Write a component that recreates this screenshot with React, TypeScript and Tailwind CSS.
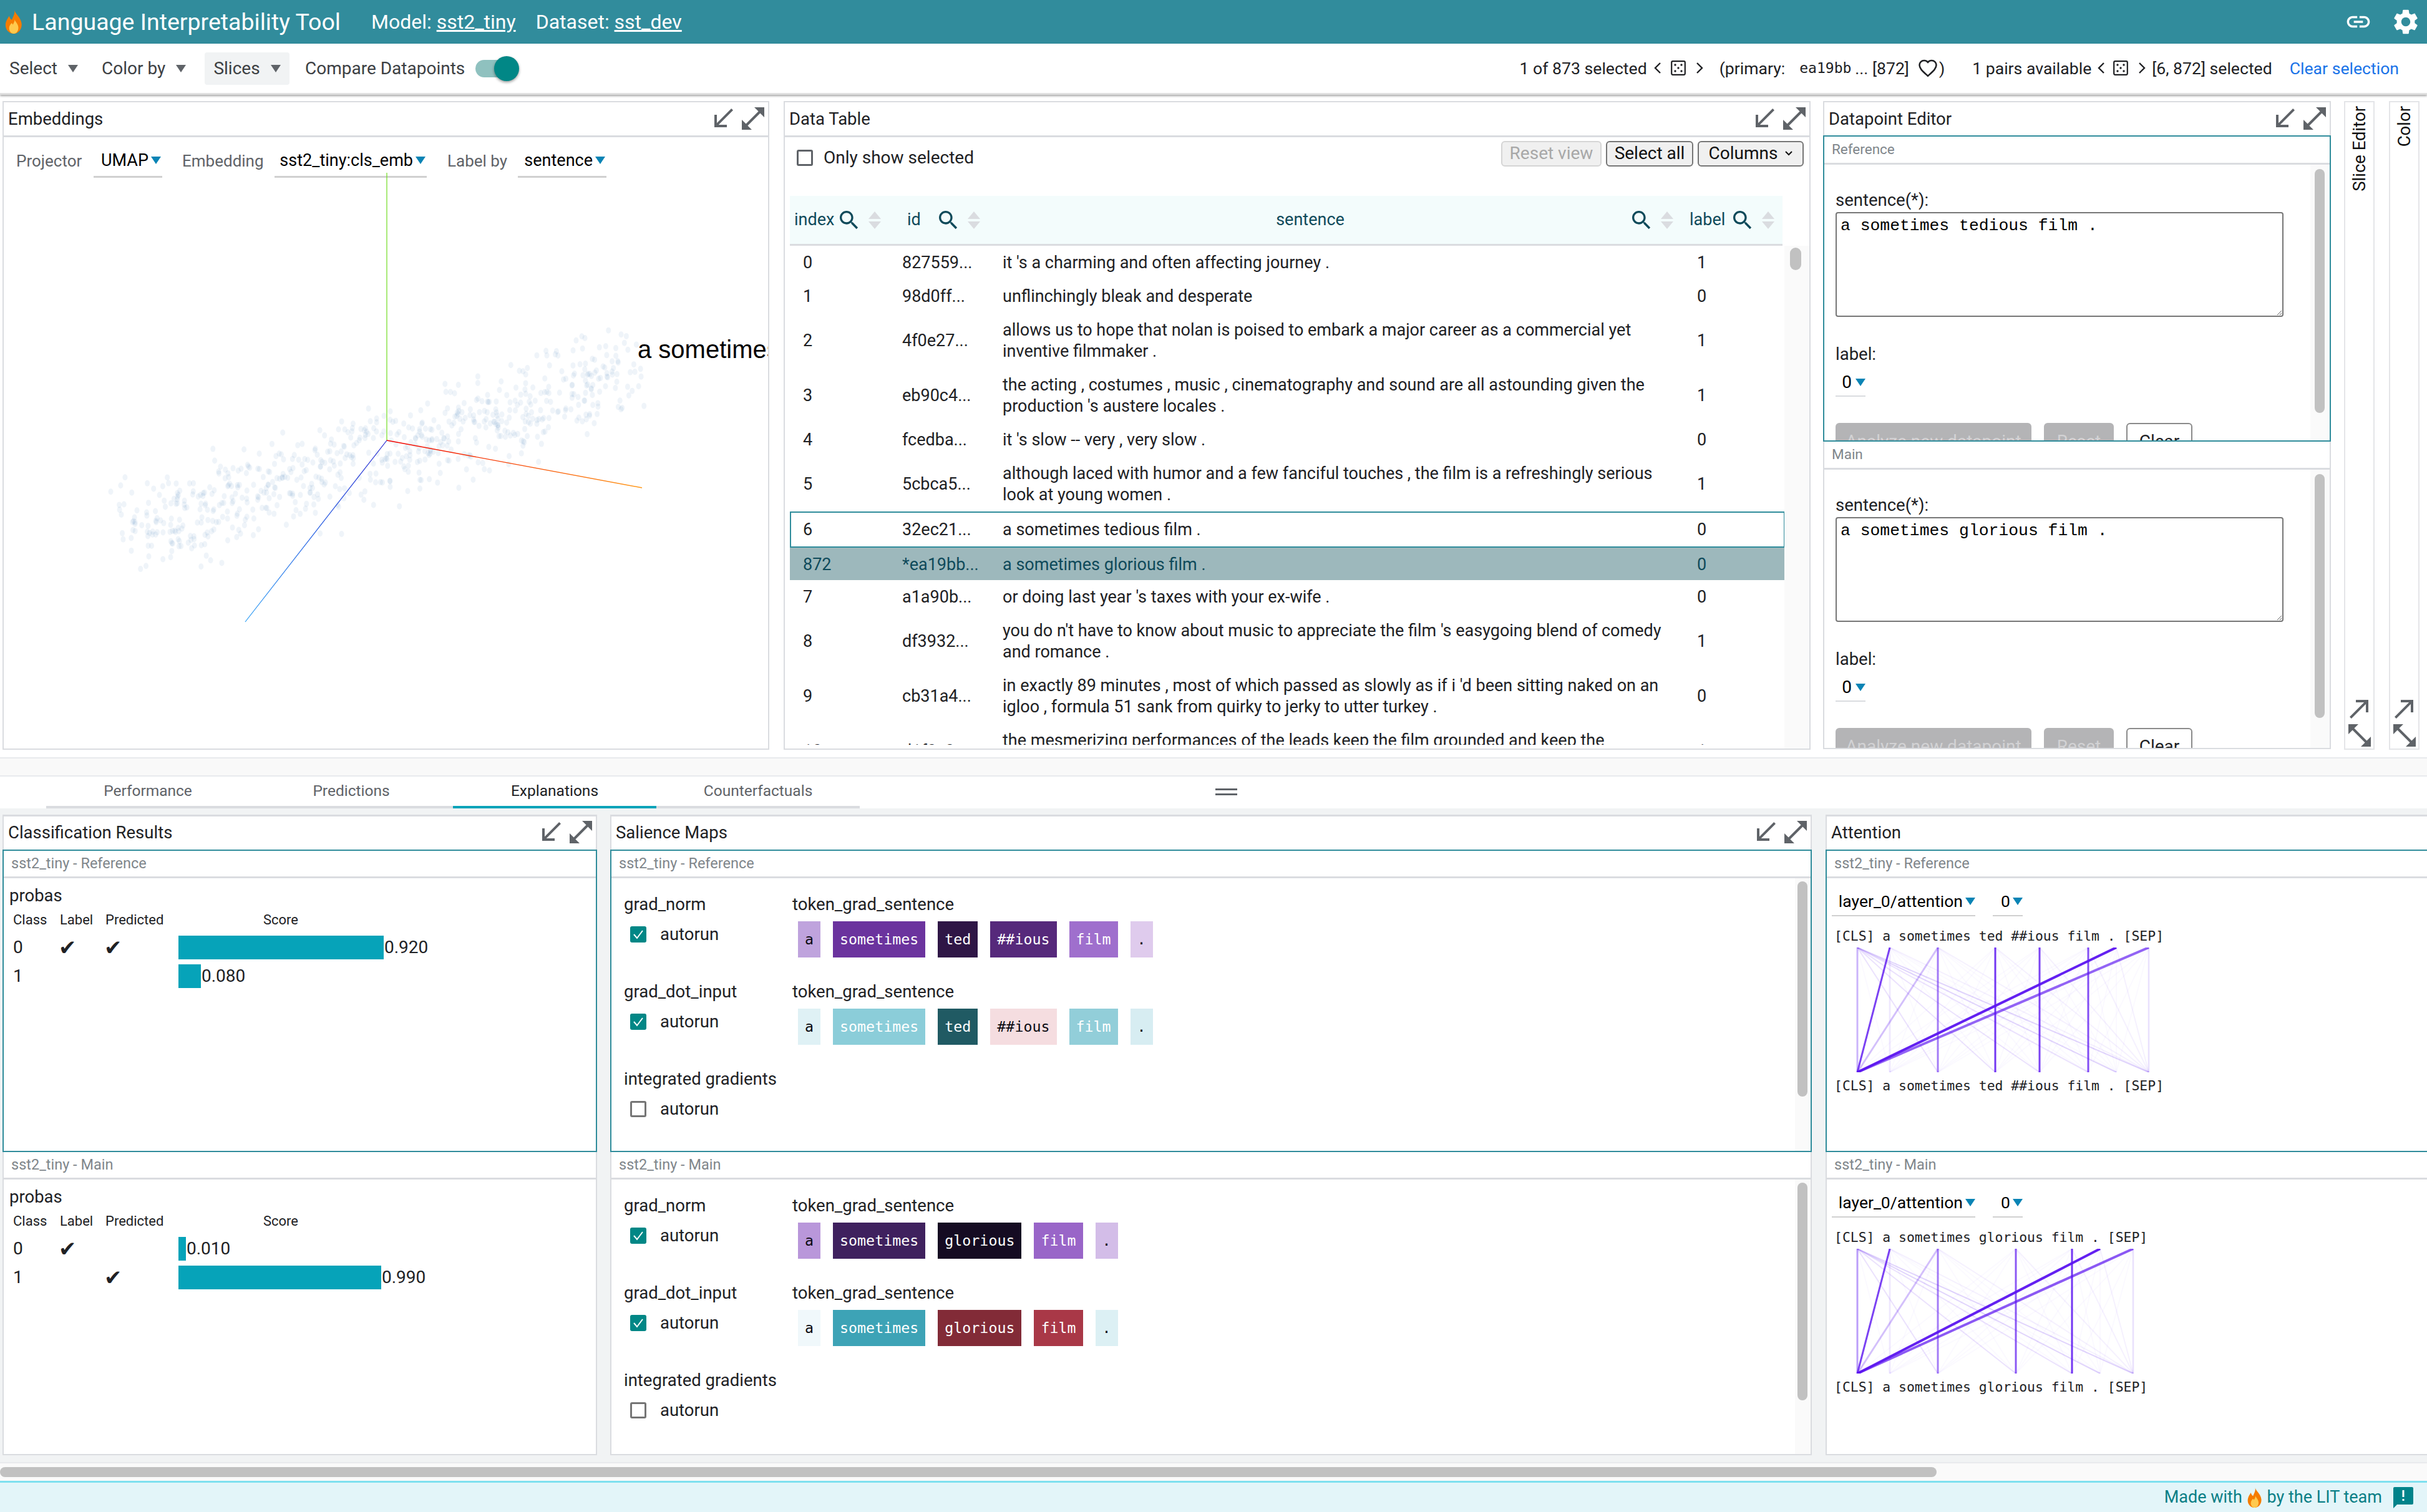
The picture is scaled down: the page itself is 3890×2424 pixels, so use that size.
import React from "react";

const F = "[font-family:Roboto,'Liberation_Sans',sans-serif]";

const Received = ({ c = "#5f6368" }: { c?: string }) => (
  <svg width="48" height="48" viewBox="0 0 24 24" fill={c}><path d="M20 5.41L18.59 4 7 15.59V9H5v10h10v-2H8.41z" /></svg>
);
const OpenFull = ({ flip = false }: { flip?: boolean }) => (
  <svg width="48" height="48" viewBox="0 0 24 24" fill="#5f6368" className={flip ? "-scale-x-100" : ""}>
    <path d="M21 11V3h-8l3.29 3.29-10 10L3 13v8h8l-3.29-3.29 10-10z" />
  </svg>
);
const Made = () => (
  <svg width="48" height="48" viewBox="0 0 24 24" fill="#5f6368"><path d="M9 5v2h6.59L4 18.59 5.41 20 17 8.41V15h2V5z" /></svg>
);
const Search = () => (
  <svg width="40" height="40" viewBox="0 0 24 24" fill="#0f4a5a" className="shrink-0">
    <path d="M15.5 14h-.79l-.28-.27C15.41 12.59 16 11.11 16 9.5 16 5.91 13.09 3 9.5 3S3 5.91 3 9.5 5.91 16 9.5 16c1.61 0 3.09-.59 4.23-1.57l.27.28v.79l5 4.99L20.49 19l-4.99-5zm-6 0C7.01 14 5 11.99 5 9.5S7.01 5 9.5 5 14 7.01 14 9.5 11.99 14 9.5 14z" />
  </svg>
);
const Sort = () => (
  <svg width="22" height="30" viewBox="0 0 22 30" fill="#dadce0" className="shrink-0">
    <path d="M11 1l10 12H1zM11 29L1 17h20z" />
  </svg>
);
const Flame = ({ s = 38 }: { s?: number }) => (
  <svg width={s * 0.74} height={s} viewBox="0 0 26 36">
    <path d="M14 0c1 6 10 11 11 21 .6 8-5 15-12 15S0 30 .5 22C1 16 4 13 6 9c1 3 2 5 4 6 2-5 5-9 4-15z" fill="#f57c00" />
    <path d="M14 14c1 4 6 7 6 13 0 5-3 9-7 9s-7-4-7-8c0-4 2-6 4-8 1 1 1 2 2 2 1-3 3-5 2-8z" fill="#ffc94d" />
  </svg>
);
const Dice = () => (
  <svg width="24" height="24" viewBox="0 0 24 24" className="block">
    <rect x="1.2" y="1.2" width="21.6" height="21.6" rx="2" fill="none" stroke="#202124" strokeWidth="2.2" />
    <g fill="#202124">
      <circle cx="7" cy="7" r="1.7" /><circle cx="17" cy="7" r="1.7" /><circle cx="12" cy="12" r="1.7" />
      <circle cx="7" cy="17" r="1.7" /><circle cx="17" cy="17" r="1.7" />
    </g>
  </svg>
);
const Chev = ({ right = false }: { right?: boolean }) => (
  <svg width="12" height="20" viewBox="0 0 12 20" fill="none" stroke="#202124" strokeWidth="2.4" className="block">
    <path d={right ? "M2 2l8 8-8 8" : "M10 2l-8 8 8 8"} />
  </svg>
);
const Tri = ({ c = "#5f6368", w = 16, h = 12 }: { c?: string; w?: number; h?: number }) => (
  <svg width={w} height={h} viewBox="0 0 16 12" fill={c} preserveAspectRatio="none"><path d="M0 0h16L8 12z" /></svg>
);

const PanelHead = ({ title, icons = true, h = "h-[53px]" }: { title: string; icons?: boolean; h?: string }) => (
  <div className={`${h} shrink-0 flex items-center justify-between pl-[7px] text-[27.5px] text-[#202124]`}>
    <span>{title}</span>
    {icons && (
      <div className="flex -mt-[2px]"><Received /><OpenFull /></div>
    )}
  </div>
);

const Sel = ({ v, w, textCls = "" }: { v: string; w: string; textCls?: string }) => (
  <div className={`${w} flex items-center justify-end gap-[4px] border-b-[3px] border-[#d0d0d0] shrink-0 text-black ${textCls}`}>
    <span>{v}</span>
    <Tri c="#0a84b5" />
  </div>
);

/* ---------- scatter ---------- */
let seed = 12345;
const rnd = () => {
  seed = (seed * 1664525 + 1013904223) % 4294967296;
  return seed / 4294967296;
};
const gauss = () => (rnd() + rnd() + rnd() - 1.5) / 1.5;
const dots: { x: number; y: number }[] = Array.from({ length: 720 }, () => {
  const t = rnd();
  const cx = 205 + t * 810;
  const cy = 868 - t * 280 - 10 * Math.sin(t * 6.28);
  const o = gauss() * 125;
  const a = gauss() * 50;
  return { x: cx + a + o * 0.3, y: cy + o * 0.82 };
});

const Scatter = () => (
  <svg viewBox="4 280 1226 925" width="1226" height="925" className="-mt-[8px] block shrink-0">
    <g fill="#4682b4" fillOpacity="0.085">
      {dots.map((d, i) => (
        <ellipse key={i} cx={d.x} cy={d.y} rx="4" ry="5" />
      ))}
    </g>
    <line x1="618" y1="280" x2="618" y2="709" stroke="#6fdc1e" strokeWidth="1.2" />
    <line x1="618" y1="709" x2="1027" y2="785" stroke="url(#gr)" strokeWidth="1.4" />
    <line x1="618" y1="709" x2="391" y2="1000" stroke="url(#gb)" strokeWidth="1.2" />
    <defs>
      <linearGradient id="gr" gradientUnits="userSpaceOnUse" x1="618" y1="709" x2="1027" y2="785">
        <stop offset="0" stopColor="#f00000" /><stop offset="1" stopColor="#ff9a1a" />
      </linearGradient>
      <linearGradient id="gb" gradientUnits="userSpaceOnUse" x1="618" y1="709" x2="391" y2="1000">
        <stop offset="0" stopColor="#2020d0" /><stop offset="1" stopColor="#2a9df4" />
      </linearGradient>
    </defs>
    <text x="1020" y="577" fontFamily="'Liberation Sans',sans-serif" fontSize="40" fill="#000">a sometimes tedious film .</text>
  </svg>
);

/* ---------- table ---------- */
type Row = { i: string; id: string; s: string[]; l: string; kind?: "ref" | "main" };
const rows: Row[] = [
  { i: "0", id: "827559...", s: ["it 's a charming and often affecting journey ."], l: "1" },
  { i: "1", id: "98d0ff...", s: ["unflinchingly bleak and desperate"], l: "0" },
  { i: "2", id: "4f0e27...", s: ["allows us to hope that nolan is poised to embark a major career as a commercial yet", "inventive filmmaker ."], l: "1" },
  { i: "3", id: "eb90c4...", s: ["the acting , costumes , music , cinematography and sound are all astounding given the", "production 's austere locales ."], l: "1" },
  { i: "4", id: "fcedba...", s: ["it 's slow -- very , very slow ."], l: "0" },
  { i: "5", id: "5cbca5...", s: ["although laced with humor and a few fanciful touches , the film is a refreshingly serious", "look at young women ."], l: "1" },
  { i: "6", id: "32ec21...", s: ["a sometimes tedious film ."], l: "0", kind: "ref" },
  { i: "872", id: "*ea19bb...", s: ["a sometimes glorious film ."], l: "0", kind: "main" },
  { i: "7", id: "a1a90b...", s: ["or doing last year 's taxes with your ex-wife ."], l: "0" },
  { i: "8", id: "df3932...", s: ["you do n't have to know about music to appreciate the film 's easygoing blend of comedy", "and romance ."], l: "1" },
  { i: "9", id: "cb31a4...", s: ["in exactly 89 minutes , most of which passed as slowly as if i 'd been sitting naked on an", "igloo , formula 51 sank from quirky to jerky to utter turkey ."], l: "0" },
  { i: "10", id: "d1f0c2...", s: ["the mesmerizing performances of the leads keep the film grounded and keep the", "audience riveted ."], l: "1" },
];

const TableRow = ({ r }: { r: Row }) => {
  const cls =
    r.kind === "ref"
      ? "outline-2 -outline-offset-2 outline-[#2f8c9b] h-[58px] text-[#202124]"
      : r.kind === "main"
        ? "bg-[#9db8bc] text-[#0f4a5a] h-[52px]"
        : "text-[#202124]";
  return (
    <div className={`w-[1595px] shrink-0 grid grid-cols-[180px_161px_1113px_1fr] items-center py-[10px] leading-[34px] text-[27px] whitespace-nowrap ${cls}`}>
      <div className="pl-[21px]">{r.i}</div>
      <div>{r.id}</div>
      <div>{r.s.map((t) => <div key={t}>{t}</div>)}</div>
      <div>{r.l}</div>
    </div>
  );
};

const HCol = ({ label, cls, labelW }: { label: string; cls: string; labelW: string }) => (
  <div className={`${cls} shrink-0 flex items-center`}>
    <div className={labelW}>{label}</div>
    <Search />
    <div className="ml-[10px]"><Sort /></div>
  </div>
);

const DataTable = () => (
  <div className="w-[1646px] ml-[23px] border-2 border-[#dadce0] bg-white flex flex-col overflow-hidden">
    <PanelHead title="Data Table" />
    <div className="border-t-[3px] border-[#dadce0] flex items-center justify-between h-[98px] shrink-0 pl-[19px] pr-[9px] -mb-[1px]">
      <div className="flex items-center gap-[17px] -mt-[29px] text-[28px] text-[#202124]">
        <div className="w-[26px] h-[26px] rounded-[3px] border-[3px] border-[#5f6368]" />
        <span>Only show selected</span>
      </div>
      <div className="flex gap-[7px] -mt-[43px] text-[28px]">
        <div className="w-[161px] h-[41px] rounded-[6px] bg-[#f0f0f0] border-2 border-[#d5d5d5] text-[#a8a8a8] flex items-center justify-center">Reset view</div>
        <div className="w-[140px] h-[41px] rounded-[6px] bg-[#f0f0f0] border-2 border-[#767676] text-[#111] flex items-center justify-center">Select all</div>
        <div className="w-[170px] h-[41px] rounded-[6px] bg-[#f0f0f0] border-2 border-[#767676] text-[#111] flex items-center justify-center gap-[12px]">Columns
          <svg width="12" height="8" viewBox="0 0 12 8" fill="none" stroke="#111" strokeWidth="2"><path d="M1 1l5 5 5-5" /></svg>
        </div>
      </div>
    </div>
    <div className="flex-1 flex min-h-0">
      <div className="flex-1 min-w-0 flex flex-col overflow-hidden pl-[8px]">
        <div className="w-[1591px] h-[80px] shrink-0 bg-[#f3fcfc] border-b-[3px] border-[#dadce0] flex items-center text-[27px] text-[#0f4a5a]">
          <HCol label="index" cls="pl-[7px]" labelW="w-[68px]" />
          <HCol label="id" cls="ml-[41px]" labelW="w-[46px]" />
          <HCol label="sentence" cls="" labelW="w-[1039px] pl-[17px] text-center" />
          <HCol label="label" cls="ml-[25px]" labelW="w-[65px]" />
        </div>
        <div className="overflow-hidden flex-1 min-h-0 mb-[6px]">
          <div className="flex flex-col h-[1000px]">
            {rows.map((r) => <TableRow key={r.i} r={r} />)}
          </div>
        </div>
      </div>
      <div className="w-[40px] bg-[#fafafa] shrink-0 mt-[80px] pt-[3px] pl-[9px]">
        <div className="w-[18px] h-[36px] rounded-full bg-[#c1c1c1]" />
      </div>
    </div>
  </div>
);

/* ---------- editor ---------- */
const Editor = ({ name, value, top, h }: { name: string; value: string; top: boolean; h: string }) => (
  <div className={`${h} shrink-0 flex flex-col overflow-hidden bg-white ${top ? "border-2 border-[#2f8c9b]" : "border-x-2 border-b-2 border-[#dadce0]"}`}>
    <div className="h-[45px] shrink-0 border-b-[3px] border-[#dadce0] flex items-center pl-[12px] text-[22.5px] text-[#80868b]">{name}</div>
    <div className="flex-1 flex min-h-0">
      <div className="flex-1 min-w-0 pl-[18px] overflow-hidden">
        <div className="h-[57px] pt-[27px] text-[27.5px] leading-[36px] text-[#202124] mt-[12px]">sentence(*):</div>
        <textarea readOnly defaultValue={value} className="block mt-[7px] w-[718px] h-[168px] border-2 border-[#767676] rounded-[4px] px-[6px] py-[5px] text-[26.4px] leading-[31px] text-black [font-family:'Liberation_Mono',monospace] outline-none" />
        <div className="mt-[42px] h-[36px] flex items-center text-[27.5px] text-[#202124]">label:</div>
        <div className="mt-[6px] w-[48px] h-[44px] border-b-2 border-[#dadce0] flex items-center justify-end gap-[6px] text-[28px]">
          <span>0</span><Tri c="#0a84b5" />
        </div>
        <div className="mt-[42px] flex text-[28px] gap-[20px] h-[60px]">
          <div className="w-[314px] bg-[#b4b4b6] text-[#d2d2d4] rounded-t-[6px] flex items-center justify-center whitespace-nowrap">Analyze new datapoint</div>
          <div className="w-[112px] bg-[#b4b4b6] text-[#d2d2d4] rounded-t-[6px] flex items-center justify-center">Reset</div>
          <div className="w-[106px] border-2 border-[#8a8a8a] rounded-[6px] text-[#202124] flex items-center justify-center">Clear</div>
        </div>
      </div>
      <div className="w-[31px] shrink-0 bg-[#fafafa] pl-[7px] pt-[7px]">
        <div className="w-[16px] h-[391px] rounded-full bg-[#c1c1c1]" />
      </div>
    </div>
  </div>
);

const Side = ({ title, ml }: { title: string; ml: string }) => (
  <div className={`w-[49px] ${ml} border-2 border-[#e4e5e8] bg-white flex flex-col items-center justify-between overflow-hidden`}>
    <div className="[writing-mode:vertical-rl] rotate-180 text-[27.5px] leading-[46px] text-[#111] mt-[6px] whitespace-nowrap">{title}</div>
    <div className="flex flex-col items-center -mb-[3px] -space-y-[5px]">
      <Made />
      <OpenFull flip />
    </div>
  </div>
);

/* ---------- bottom ---------- */
const CardHead = ({ t }: { t: string }) => (
  <div className="h-[44px] shrink-0 border-b-[3px] border-[#dadce0] flex items-center pl-[12px] text-[23.5px] text-[#80868b]">{t}</div>
);

const ScoreRow = ({ c, label, pred, w, v }: { c: string; label?: boolean; pred?: boolean; w: string; v: string }) => (
  <div className="flex items-center h-[38px] text-[28px] text-[#202124]">
    <div className="w-[75px]">{c}</div>
    <div className="w-[73px] text-[34px] -ml-[2px] mr-[2px] [font-family:'DejaVu_Sans',sans-serif]">{label ? "✔" : ""}</div>
    <div className="w-[117px] text-[34px] -ml-[2px] mr-[2px] [font-family:'DejaVu_Sans',sans-serif]">{pred ? "✔" : ""}</div>
    <div className={`${w} h-full bg-[#06a3b9] shrink-0`} />
    <div className="ml-[1px]">{v}</div>
  </div>
);

const Probas = ({ a, b }: { a: { l?: boolean; p?: boolean; w: string; v: string }; b: { l?: boolean; p?: boolean; w: string; v: string } }) => (
  <div className="pl-[9px]">
    <div className="mt-[9px] h-[38px] flex items-center text-[27.5px] text-[#202124]">probas</div>
    <div className="mt-[3px] pl-[6px] h-[32px] flex items-center text-[22px] text-[#202124]">
      <div className="w-[75px]">Class</div><div className="w-[73px]">Label</div><div className="w-[117px]">Predicted</div><div className="w-[328px] text-center">Score</div>
    </div>
    <div className="mt-[10px] pl-[6px] flex flex-col gap-[8px]">
      <ScoreRow c="0" label={a.l} pred={a.p} w={a.w} v={a.v} />
      <ScoreRow c="1" label={b.l} pred={b.p} w={b.w} v={b.v} />
    </div>
  </div>
);

const Check = ({ on }: { on?: boolean }) =>
  on ? (
    <div className="w-[26px] h-[26px] rounded-[3px] bg-[#018786] flex items-center justify-center">
      <svg width="20" height="20" viewBox="0 0 20 20" fill="none" stroke="#fff" strokeWidth="2"><path d="M3 10l5 6 9-12" /></svg>
    </div>
  ) : (
    <div className="w-[26px] h-[26px] rounded-[3px] border-[3px] border-[#757575]" />
  );

type Tok = { t: string; bg: string; dark?: boolean };
const Token = ({ t, bg, dark }: Tok) => (
  <div style={{ backgroundColor: bg }} className={`h-[58px] px-[11px] flex items-center text-[23.3px] [font-family:'DejaVu_Sans_Mono',monospace] ${dark ? "text-[#0b0b12]" : "text-white"}`}>{t}</div>
);

const SalRow = ({ name, on, toks }: { name: string; on?: boolean; toks?: Tok[] }) => (
  <div className="h-[140px] shrink-0 flex text-[27.5px] text-[#202124] whitespace-nowrap">
    <div className="w-[290px] pl-[20px] shrink-0">
      <div className="h-[40px] flex items-center">{name}</div>
      <div className="mt-[8px] pl-[10px] h-[40px] flex items-center gap-[22px]"><Check on={on} /><span>autorun</span></div>
    </div>
    {toks && (
      <div>
        <div className="h-[40px] flex items-center">token_grad_sentence</div>
        <div className="mt-[7px] ml-[9px] flex gap-[20px]">{toks.map((x) => <Token key={x.t} {...x} />)}</div>
      </div>
    )}
  </div>
);

const Salience = ({ a, b, thumb }: { a: Tok[]; b: Tok[]; thumb: string }) => (
  <div className="flex-1 flex min-h-0">
    <div className="flex-1 min-w-0 overflow-hidden pt-[22px]">
      <SalRow name="grad_norm" on toks={a} />
      <SalRow name="grad_dot_input" on toks={b} />
      <SalRow name="integrated gradients" />
      <SalRow name="lime" />
    </div>
    <div className="w-[25px] shrink-0 bg-[#fafafa] pl-[4px] pt-[5px]">
      <div className={`w-[16px] ${thumb} rounded-full bg-[#c1c1c1]`} />
    </div>
  </div>
);

const sel1: Tok[][] = [
  [
    { t: "a", bg: "#bfa3dd", dark: true },
    { t: "sometimes", bg: "#6b339e" },
    { t: "ted", bg: "#2f1646" },
    { t: "##ious", bg: "#56297b" },
    { t: "film", bg: "#9f6fcd" },
    { t: ".", bg: "#dfcbed", dark: true },
  ],
  [
    { t: "a", bg: "#dff1f5", dark: true },
    { t: "sometimes", bg: "#8bcdd9" },
    { t: "ted", bg: "#205a63" },
    { t: "##ious", bg: "#f5dde0", dark: true },
    { t: "film", bg: "#92ced9" },
    { t: ".", bg: "#d7edf2", dark: true },
  ],
];
const sel2: Tok[][] = [
  [
    { t: "a", bg: "#b997da", dark: true },
    { t: "sometimes", bg: "#3f215e" },
    { t: "glorious", bg: "#150b22" },
    { t: "film", bg: "#9965c8" },
    { t: ".", bg: "#d3bde8", dark: true },
  ],
  [
    { t: "a", bg: "#f0f8fb", dark: true },
    { t: "sometimes", bg: "#3da3b6" },
    { t: "glorious", bg: "#822b37" },
    { t: "film", bg: "#a93847" },
    { t: ".", bg: "#dcf0f4", dark: true },
  ],
];

const Attn = ({ text, xs, strong }: { text: string; xs: number[]; strong: number[][] }) => {
  const lines: number[][] = [];
  xs.forEach((_, i) =>
    xs.forEach((_, j) => {
      let o = 0.025;
      if (i === 0 && j > 1) o = j >= xs.length - 2 ? 0.18 : 0.12;
      if (j === xs.length - 1) o = Math.max(o, 0.06);
      lines.push([i, j, o, 2]);
    }),
  );
  const all = [...lines, ...strong];
  return (
    <div className="pl-[12px]">
      <div className="mt-[14px] h-[36px] flex items-center whitespace-pre text-[21.4px] text-[#202124] [font-family:'DejaVu_Sans_Mono',monospace]">{text}</div>
      <svg width="528" height="200" viewBox="0 0 528 200" className="block shrink-0">
        {all.map((l, k) => (
          <line key={k} x1={xs[l[0]]} y1="0" x2={xs[l[1]]} y2="200" stroke="#5b14f0" strokeOpacity={l[2]} strokeWidth={l[3]} />
        ))}
      </svg>
      <div className="mt-[4px] h-[36px] flex items-center whitespace-pre text-[21.4px] text-[#202124] [font-family:'DejaVu_Sans_Mono',monospace]">{text}</div>
    </div>
  );
};

const AttnSel = () => (
  <div className="flex items-end pl-[8px] gap-[28px] mt-[23px] text-[26.5px]">
    <Sel v="layer_0/attention" w="w-[230px]" textCls="h-[38px] !border-b-2 pb-[8px]" />
    <Sel v="0" w="w-[48px]" textCls="h-[38px] !border-b-2 pb-[8px]" />
  </div>
);

const Attention = ({ text, xs, strong }: { text: string; xs: number[]; strong: number[][] }) => (
  <div className="flex-1 min-h-0 overflow-hidden">
    <AttnSel />
    <Attn text={text} xs={xs} strong={strong} />
  </div>
);

const BottomPanel = ({ title, w, ml = "", icons = true, a, b }: { title: string; w: string; ml?: string; icons?: boolean; a: React.ReactNode; b: React.ReactNode }) => (
  <div className={`${w} ${ml} shrink-0 flex flex-col overflow-hidden`}>
    <div className="border-2 border-b-0 border-t-[3px] border-[#dadce0] bg-white">
      <PanelHead title={title} icons={icons} h="h-[53px] pb-[2px]" />
    </div>
    <div className="h-[485px] shrink-0 bg-white border-2 border-[#2f8c9b] flex flex-col overflow-hidden">
      <CardHead t="sst2_tiny - Reference" />
      {a}
    </div>
    <div className="flex-1 min-h-0 bg-white border-x-2 border-b-2 border-[#dadce0] flex flex-col overflow-hidden">
      <CardHead t="sst2_tiny - Main" />
      {b}
    </div>
  </div>
);

const App = () => (
  <div className={`w-[3890px] h-[2424px] overflow-hidden flex flex-col bg-white ${F}`}>
    {/* header */}
    <header className="h-[70px] shrink-0 bg-[#318c9c] flex items-center text-white pl-[8px] pr-[10px]">
      <Flame />
      <span className="ml-[15px] text-[37.5px] whitespace-nowrap">Language Interpretability Tool</span>
      <span className="ml-[49px] text-[32px] whitespace-nowrap">Model: <span className="underline">sst2_tiny</span></span>
      <span className="ml-[32px] text-[32px] whitespace-nowrap">Dataset: <span className="underline">sst_dev</span></span>
      <div className="ml-auto flex items-center gap-[30px]">
        <svg width="44" height="44" viewBox="0 0 24 24" fill="#fff"><path d="M3.9 12c0-1.71 1.39-3.1 3.1-3.1h4V7H7c-2.76 0-5 2.24-5 5s2.24 5 5 5h4v-1.9H7c-1.71 0-3.1-1.39-3.1-3.1zM8 13h8v-2H8v2zm9-6h-4v1.9h4c1.71 0 3.1 1.39 3.1 3.1s-1.39 3.1-3.1 3.1h-4V17h4c2.76 0 5-2.24 5-5s-2.24-5-5-5z" /></svg>
        <svg width="48" height="48" viewBox="0 0 24 24" fill="#fff"><path d="M19.14 12.94c.04-.3.06-.61.06-.94 0-.32-.02-.64-.07-.94l2.03-1.58c.18-.14.23-.41.12-.61l-1.92-3.32c-.12-.22-.37-.29-.59-.22l-2.39.96c-.5-.38-1.03-.7-1.62-.94l-.36-2.54c-.04-.24-.24-.41-.48-.41h-3.84c-.24 0-.43.17-.47.41l-.36 2.54c-.59.24-1.13.57-1.62.94l-2.39-.96c-.22-.08-.47 0-.59.22L2.74 8.87c-.12.21-.08.47.12.61l2.03 1.58c-.05.3-.09.63-.09.94s.02.64.07.94l-2.03 1.58c-.18.14-.23.41-.12.61l1.92 3.32c.12.22.37.29.59.22l2.39-.96c.5.38 1.03.7 1.62.94l.36 2.54c.05.24.24.41.48.41h3.84c.24 0 .44-.17.47-.41l.36-2.54c.59-.24 1.13-.56 1.62-.94l2.39.96c.22.08.47 0 .59-.22l1.92-3.32c.12-.22.07-.47-.12-.61l-2.01-1.58zM12 15.6c-1.98 0-3.6-1.62-3.6-3.6s1.62-3.6 3.6-3.6 3.6 1.62 3.6 3.6-1.62 3.6-3.6 3.6z" /></svg>
      </div>
    </header>

    {/* toolbar */}
    <div className="relative z-10 h-[82px] shrink-0 bg-white flex items-center border-b-[3px] border-[#e0e0e0] shadow-[0_2px_3px_rgba(0,0,0,0.35)] text-[28px] text-[#3c4043] whitespace-nowrap">
      <div className="flex items-center pl-[15px] w-[163px] gap-[17px]"><span>Select</span><Tri /></div>
      <div className="flex items-center w-[165px] gap-[17px]"><span>Color by</span><Tri /></div>
      <div className="flex items-center justify-center gap-[17px] w-[136px] h-[52px] bg-[#f1f3f4] rounded-[4px]"><span>Slices</span><Tri /></div>
      <span className="ml-[25px]">Compare Datapoints</span>
      <div className="ml-[17px] w-[70px] h-[40px] flex items-center">
        <div className="w-[50px] h-[28px] rounded-l-full bg-[#8fc1bf]" />
        <div className="w-[40px] h-[40px] rounded-full bg-[#018786] -ml-[20px] shadow-[0_2px_4px_rgba(0,0,0,0.4)]" />
      </div>
      <div className="ml-auto flex items-center pr-[45px] text-[#202124] text-[26.6px]">
        <span>1 of 873 selected</span>
        <span className="ml-[11px]"><Chev /></span>
        <span className="ml-[15px]"><Dice /></span>
        <span className="ml-[16px]"><Chev right /></span>
        <span className="ml-[26px]">(primary:</span>
        <span className="ml-[23px] [font-family:'DejaVu_Sans_Mono',monospace] text-[23px]">ea19bb</span>
        <span className="ml-[6px]">... [872]</span>
        <svg className="ml-[12px]" width="36" height="36" viewBox="0 0 24 24" fill="none" stroke="#202124" strokeWidth="1.7"><path d="M12 20.5l-1.2-1.1C6 15.2 3 12.4 3 8.9 3 6.1 5.2 4 8 4c1.5 0 3 .7 4 1.9C13 4.7 14.5 4 16 4c2.8 0 5 2.1 5 4.9 0 3.5-3 6.3-7.8 10.5L12 20.5z" /></svg>
        <span>)</span>
        <span className="ml-[44px]">1 pairs available</span>
        <span className="ml-[10px]"><Chev /></span>
        <span className="ml-[13px]"><Dice /></span>
        <span className="ml-[16px]"><Chev right /></span>
        <span className="ml-[10px]">[6, 872] selected</span>
        <span className="ml-[28px] text-[#1a73e8]">Clear selection</span>
      </div>
    </div>

    {/* top row */}
    <div className="h-[1050px] shrink-0 flex pl-[4px] pt-[10px] bg-white">
      {/* Embeddings */}
      <div className="w-[1229px] border-2 border-[#dadce0] bg-white flex flex-col overflow-hidden">
        <PanelHead title="Embeddings" />
        <div className="border-t-[3px] border-[#dadce0] h-[68px] shrink-0 flex items-end pl-[20px] text-[26px] leading-[30px] text-[#5f6368]">
          <span className="w-[124px] h-[42px]">Projector</span>
          <Sel v="UMAP" w="w-[110px] h-[42px] pb-[12px] pr-[2px] text-[27px]" />
          <span className="ml-[32px] w-[148px] h-[42px]">Embedding</span>
          <Sel v="sst2_tiny:cls_emb" w="w-[244px] h-[42px] pb-[12px] pr-[2px] text-[27px]" />
          <span className="ml-[33px] w-[113px] h-[42px]">Label by</span>
          <Sel v="sentence" w="w-[142px] h-[42px] pb-[12px] pr-[2px] text-[27px]" />
        </div>
        <Scatter />
      </div>

      <DataTable />

      {/* Datapoint editor */}
      <div className="w-[814px] ml-[20px] flex flex-col overflow-hidden">
        <div className="border-2 border-b-0 border-[#dadce0] bg-white">
          <PanelHead title="Datapoint Editor" />
        </div>
        <Editor name="Reference" value="a sometimes tedious film ." top h="h-[491px]" />
        <Editor name="Main" value="a sometimes glorious film ." top={false} h="h-[493px]" />
      </div>

      <Side title="Slice Editor" ml="ml-[21px]" />
      <Side title="Color" ml="ml-[23px]" />
    </div>

    {/* resize bar */}
    <div className="h-[31px] shrink-0 mt-[12px] bg-[#f9f9f9] border-y-2 border-[#e8eaed]" />

    {/* tabs */}
    <div className="h-[51px] shrink-0 bg-white flex pl-[74px] text-[24.5px] text-[#5f6368]">
      {["Performance", "Predictions", "Explanations", "Counterfactuals"].map((t, i) => (
        <div key={t} className={`w-[326px] h-full flex items-center justify-center border-b-[4px] ${i === 2 ? "border-[#06a3b9] text-[#202124]" : "border-[#dadce0]"}`}>{t}</div>
      ))}
      <div className="ml-[570px] w-[35px] flex flex-col justify-center gap-[5px] pb-[2px]">
        <div className="h-[3px] bg-[#5f6368]" /><div className="h-[3px] bg-[#5f6368]" />
      </div>
    </div>

    {/* bottom row */}
    <div className="flex-1 min-h-0 bg-[#f1f3f4] flex flex-col">
      <div className="h-[1037px] shrink-0 flex pl-[4px] pt-[10px] overflow-hidden">
        <BottomPanel
          title="Classification Results"
          w="w-[953px]"
          a={<Probas a={{ l: true, p: true, w: "w-[329px]", v: "0.920" }} b={{ w: "w-[36px]", v: "0.080" }} />}
          b={<Probas a={{ l: true, w: "w-[12px]", v: "0.010" }} b={{ p: true, w: "w-[325px]", v: "0.990" }} />}
        />
        <BottomPanel
          title="Salience Maps"
          w="w-[1926px]"
          ml="ml-[21px]"
          a={<Salience a={sel1[0]} b={sel1[1]} thumb="h-[345px]" />}
          b={<Salience a={sel2[0]} b={sel2[1]} thumb="h-[349px]" />}
        />
        <BottomPanel
          title="Attention"
          w="w-[1020px]"
          ml="ml-[22px]"
          icons={false}
          a={
            <Attention
              text="[CLS] a sometimes ted ##ious film . [SEP]"
              xs={[37, 89, 166, 258, 329, 407, 452, 504]}
              strong={[
                [0, 0, 0.3, 3], [1, 0, 0.8, 3], [2, 0, 0.25, 3], [2, 2, 0.55, 3], [3, 3, 0.85, 3],
                [4, 4, 0.8, 3], [5, 5, 0.75, 3], [6, 0, 0.95, 4], [7, 0, 0.65, 4], [1, 1, 0.07, 3], [7, 7, 0.07, 3],
              ]}
            />
          }
          b={
            <Attention
              text="[CLS] a sometimes glorious film . [SEP]"
              xs={[37, 89, 166, 291, 381, 426, 479]}
              strong={[
                [0, 0, 0.4, 3], [1, 0, 0.8, 3], [2, 0, 0.25, 3], [2, 2, 0.55, 3], [3, 3, 0.7, 3],
                [4, 4, 0.85, 3], [5, 0, 0.95, 4], [6, 0, 0.7, 4], [1, 1, 0.07, 3], [6, 6, 0.07, 3],
              ]}
            />
          }
        />
      </div>

      {/* horizontal scrollbar */}
      <div className="mt-[11px] h-[30px] shrink-0 bg-[#fafafa] border-t-2 border-[#e8eaed] pt-[6px]">
        <div className="w-[3104px] h-[16px] rounded-full bg-[#c1c1c1]" />
      </div>

      {/* footer */}
      <footer className="flex-1 min-h-0 bg-[#e3f5f9] border-t-[3px] border-[#7ee0ef] flex items-center justify-end pr-[22px] text-[27px] text-[#0a7f86] whitespace-nowrap">
        <span>Made with</span>
        <span className="mx-[8px]"><Flame s={32} /></span>
        <span>by the LIT team</span>
        <svg className="ml-[18px]" width="32" height="34" viewBox="0 0 32 34"><path d="M2 0h28a2 2 0 0 1 2 2v24a2 2 0 0 1-2 2H6l-6 6V2a2 2 0 0 1 2-2z" fill="#00838a" /><rect x="14.5" y="5" width="3" height="11" fill="#fff" /><rect x="14.5" y="19" width="3" height="3" fill="#fff" /></svg>
      </footer>
    </div>
  </div>
);

export default App;
